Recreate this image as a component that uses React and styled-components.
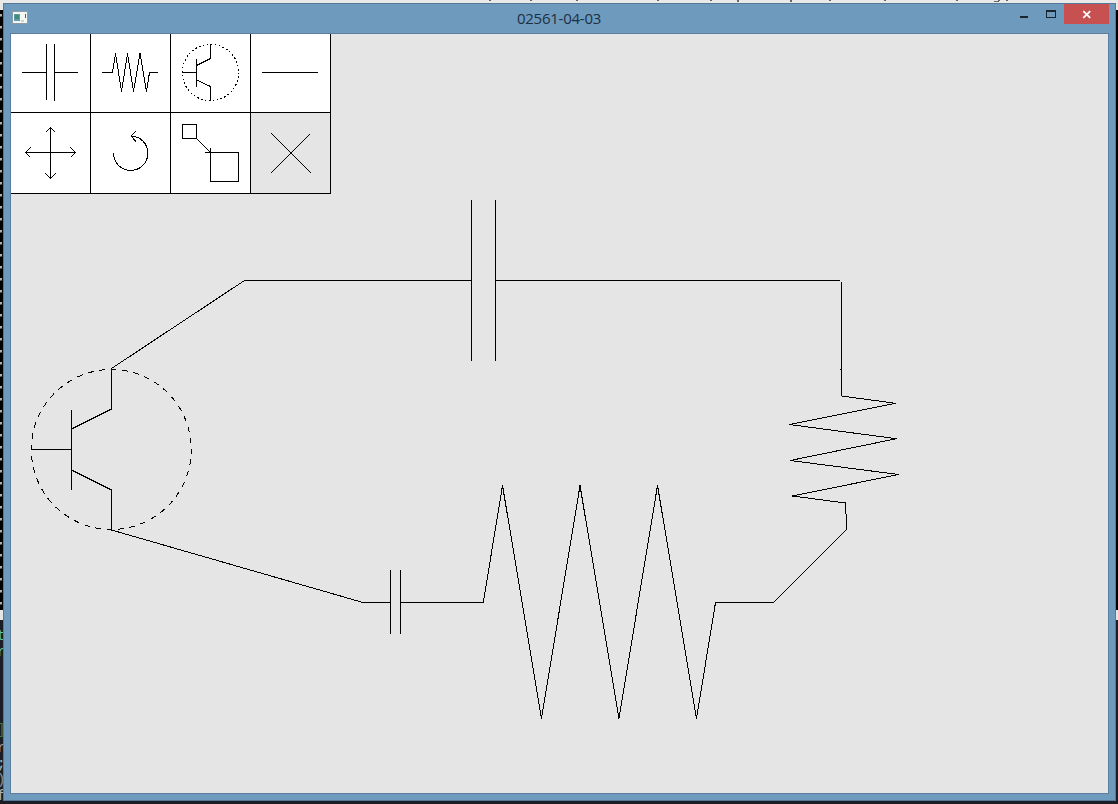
import React from "react";
import styled, { createGlobalStyle } from "styled-components";

const GlobalStyle = createGlobalStyle`
  html, body { margin: 0; padding: 0; overflow: hidden; }
  * { box-sizing: border-box; }
`;

const Desktop = styled.div`
  display: grid;
  grid-template: 804px / 1118px;
  width: 1118px;
  height: 804px;
  overflow: hidden;
  background: linear-gradient(#e9e9e9 0 10px, #000 10px 610px, #e6e6e6 610px 620px, #1b1f25 620px);
  font-family: "Open Sans", "Noto Sans", sans-serif;
`;

const Background = styled.div`
  grid-area: 1 / 1;
  display: flex;
  flex-direction: column;
  overflow: hidden;
`;

const TextTips = styled.svg`
  display: block;
  flex: none;
`;

const ConsoleEdge = styled.div`
  flex: none;
  width: 2px;
  height: 596px;
  margin-top: 11px;
  background: repeating-linear-gradient(#b0b0b0 0 2px, #555 2px 3px, #000 3px 12px);
`;

const EditorEdge = styled.div`
  display: flex;
  flex-direction: column;
  flex: none;
  width: 3px;
  height: 191px;
  padding-top: 18px;
  overflow: hidden;
`;

const CodeTail = styled.span`
  flex: none;
  height: ${(p) => p.$h}px;
  margin-left: -3px;
  color: ${(p) => p.$color};
  font: 14px/16px "Liberation Mono", monospace;
`;

const Window = styled.section`
  grid-area: 1 / 1;
  display: flex;
  flex-direction: column;
  width: 1113px;
  height: 798px;
  margin: 3px 0 0 3px;
  padding: 0 6px 6px;
  border: 1px solid #56799a;
  background: #6e9abd;
`;

const TitleBar = styled.header`
  display: grid;
  grid-template-columns: 1fr auto 1fr;
  height: 29px;
  flex: none;
`;

const AppIcon = styled.svg`
  display: block;
  margin: 7px 0 0 2px;
`;

const Title = styled.h1`
  margin: 0 1px 0 0;
  color: #1b3044;
  font-size: 15px;
  font-weight: 400;
  line-height: 29px;
  letter-spacing: -0.25px;
`;

const Controls = styled.div`
  display: flex;
  justify-content: flex-end;
`;

const ControlButton = styled.button`
  width: ${(p) => (p.$close ? 45 : 27)}px;
  height: 20px;
  padding: 0;
  border: 0;
  background: ${(p) => (p.$close ? "#c75050" : "transparent")};
  svg { display: block; }
`;

const Client = styled.main`
  display: grid;
  grid-template: 759px / 1097px;
  flex: 1;
  border: 1px solid #5c7f9f;
  background: #e5e5e5;
  overflow: hidden;
`;

const Palette = styled.nav`
  grid-area: 1 / 1;
  align-self: start;
  display: grid;
  grid-template-columns: repeat(4, 80px);
  grid-template-rows: 79px 81px;
  width: 320px;
`;

const Tool = styled.button`
  padding: 0;
  border: solid #000;
  border-width: 0 1px 1px 0;
  background: ${(p) => (p.$active ? "#e5e5e5" : "#fff")};
  overflow: hidden;
`;

const Glyph = styled.svg`
  display: block;
  fill: none;
  stroke: #000;
  stroke-width: 1;
  shape-rendering: crispEdges;
`;

const Circuit = styled(Glyph)`
  grid-area: 1 / 1;
  pointer-events: none;
`;

const tools = [
  { name: "Capacitor", box: "11 34 79 78", art: <path d="M22 72.5H46.5M46.5 44V100M54.5 44V101M54.5 72.5H78" /> },
  { name: "Resistor", box: "91 34 79 78", art: <path d="M102 72.5H112.5L115.5 53.5L121.5 91.5L127.5 53.5L133.5 91.5L140 53.5L146.5 91.5L149.5 72.5H158" /> },
  {
    name: "Transistor",
    box: "171 34 79 78",
    art: (
      <>
        <circle cx="210.5" cy="72.5" r="28.2" strokeDasharray="1.7 2.327" />
        <path d="M182 72.5H196.5M196.5 59V87M196.5 65.5L210.5 58.5V44M196.5 80L210.5 86.5V101" />
      </>
    ),
  },
  { name: "Wire", box: "251 34 79 78", art: <path d="M262 72.5H318" /> },
  { name: "Move", box: "11 113 79 80", art: <path d="M50.5 127V179M25 152.5H76M45.5 132.5L50.5 127.5L55.5 132.5M45.5 173.5L50.5 178.5L55.5 173.5M30.5 147.5L25.5 152.5L30.5 157.5M70.5 147.5L75.5 152.5L70.5 157.5" /> },
  { name: "Rotate", box: "91 113 79 80", art: <path d="M113.5 153A17.2 17.2 0 1 0 131 136M136 131L131 136L136 141.5" /> },
  { name: "Scale", box: "171 113 79 80", art: <path d="M182.5 124.5H196.5V138.5H182.5ZM196.5 138.5L210.5 152.5M205 152.5H210.5V147.5M210.5 152.5H238.5V181.5H210.5Z" /> },
  { name: "Delete", box: "251 113 79 80", active: true, art: <path d="M271.3 133.5L310.8 173M310.3 134L271 173" /> },
];

const codeTails = [
  { text: "t", color: "#5cc79e", h: 16 },
  { text: "r", color: "#5cc79e", h: 78 },
  { text: "]", color: "#3f7446", h: 18 },
  { text: "r", color: "#a0a4a8", h: 16 },
  { text: ";", color: "#aab2ba", h: 16 },
  { text: ")", color: "#8793a0", h: 16 },
  { text: "f", color: "#b0b0b0", h: 16 },
];

export default function App() {
  return (
    <Desktop>
      <GlobalStyle />
      <Background aria-hidden="true">
        <TextTips width="1118" height="3" viewBox="0 0 1118 3">
          <path fill="#666" d="M489 0h2v1h-2zM530 0h2v1h-2zM576 0h2v1h-2zM657 0h2v1h-2zM710 0h2v1h-2zM737 0h2v2h-2zM790 0h2v2h-2zM829 0h2v1h-2zM884 0h2v1h-2zM956 0h2v1h-2zM994 1h5v1h-5zM998 0h2v1h-2zM1006 0h2v1h-2z" />
        </TextTips>
        <ConsoleEdge />
        <EditorEdge>
          {codeTails.map((c, i) => (
            <CodeTail key={i} $color={c.color} $h={c.h}>{c.text}</CodeTail>
          ))}
        </EditorEdge>
      </Background>
      <Window>
        <TitleBar>
          <AppIcon width="16" height="14" viewBox="12 11 16 14" shapeRendering="crispEdges">
            <path fill="#8b9aa5" d="M12 11H28V24H12Z" />
            <path fill="#f5f7f5" d="M13 12H27V23H13Z" />
            <path fill="#5e9eaa" d="M14 14H20V21H14Z" />
            <path fill="#438b77" d="M15 15H19V19H15Z" />
            <path fill="#c8d6cb" d="M21 20H24V22H21Z" />
            <path fill="#53606a" d="M25 14H26V18H25Z" />
          </AppIcon>
          <Title>02561-04-03</Title>
          <Controls>
            <ControlButton aria-label="Minimize">
              <svg width="27" height="20" viewBox="1010 4 27 20"><path fill="#1b252d" d="M1020 16H1028V18H1020Z" /></svg>
            </ControlButton>
            <ControlButton aria-label="Maximize">
              <svg width="27" height="20" viewBox="1037 4 27 20"><path fill="#1b252d" fillRule="evenodd" d="M1046 10H1056V18H1046ZM1047 12V17H1055V12Z" /></svg>
            </ControlButton>
            <ControlButton $close aria-label="Close">
              <svg width="45" height="20" viewBox="1064 4 45 20"><path stroke="#fff" strokeWidth="1.8" d="M1083.3 11.2L1090.2 17.8M1090.2 11.2L1083.3 17.8" /></svg>
            </ControlButton>
          </Controls>
        </TitleBar>
        <Client>
          <Palette>
            {tools.map((t) => {
              const [, , w, h] = t.box.split(" ");
              return (
                <Tool key={t.name} $active={t.active} aria-label={t.name}>
                  <Glyph width={w} height={h} viewBox={t.box}>{t.art}</Glyph>
                </Tool>
              );
            })}
          </Palette>
          <Circuit width="1097" height="759" viewBox="11 34 1097 759">
            <circle cx="111.3" cy="449.5" r="80" strokeDasharray="5.7 5.724" strokeDashoffset="1.3" />
            <path d="M31 449.5H71.5M71.5 410V490M71.5 429L111.5 409V369M71.5 470L111.5 490V530" />
            <path d="M111.5 368.5L244.5 280.5H471.5M471.5 200V361M495.5 200V361M495.5 280.5H840" />
            <path d="M841.5 282V396L895.5 403.3L789.3 424.5L896.5 438.7L790.3 460.5L898.5 474.5L792.3 496L845.5 503V514M846.5 514V529.5L773.5 602.5H715.5M840 369.5H842" />
            <path d="M111.5 530L363 602.5H390.5M390.5 570V634M400.5 570V634M400.5 602.5H483.3L502.5 485.5L541.5 718.5L580 485.5L619 718.5L657.5 485.5L696.5 718.5L715.5 602.5" />
          </Circuit>
        </Client>
      </Window>
    </Desktop>
  );
}
